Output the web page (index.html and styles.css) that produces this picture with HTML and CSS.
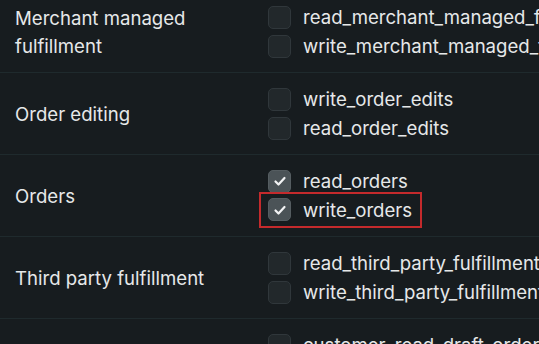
FILE: index.html
```html
<!DOCTYPE html>
<html>
<head>
    <title>Access scopes</title>
    <link rel="stylesheet" href="styles.css">
</head>
<body>

<div class="scope-list">
    <div class="scope-row">
        <div class="scope-name">Merchant managed<br>fulfillment</div>
        <div class="scope-options">
            <label class="option"><span class="box"></span>read_merchant_managed_fulfillment_orders</label>
            <label class="option"><span class="box"></span>write_merchant_managed_fulfillment_orders</label>
        </div>
    </div>
    <div class="scope-row">
        <div class="scope-name">Order editing</div>
        <div class="scope-options">
            <label class="option"><span class="box"></span>write_order_edits</label>
            <label class="option"><span class="box"></span>read_order_edits</label>
        </div>
    </div>
    <div class="scope-row">
        <div class="scope-name">Orders</div>
        <div class="scope-options">
            <label class="option"><span class="box checked"><svg viewBox="0 0 16 16"><path d="M3.5 8.5l3 3 6-6.5"/></svg></span>read_orders</label>
            <label class="option highlight"><span class="box checked"><svg viewBox="0 0 16 16"><path d="M3.5 8.5l3 3 6-6.5"/></svg></span>write_orders</label>
        </div>
    </div>
    <div class="scope-row">
        <div class="scope-name">Third party fulfillment</div>
        <div class="scope-options">
            <label class="option"><span class="box"></span>read_third_party_fulfillment_orders</label>
            <label class="option"><span class="box"></span>write_third_party_fulfillment_orders</label>
        </div>
    </div>
    <div class="scope-row">
        <div class="scope-name">Draft orders</div>
        <div class="scope-options">
            <label class="option"><span class="box"></span>customer_read_draft_orders</label>
            <label class="option"><span class="box"></span>read_draft_orders</label>
        </div>
    </div>
</div>

</body>
</html>
```

FILE: styles.css
```css
body {
    margin: 0;
    background: #171c1f;
    color: #e6e8e9;
    font-family: Inter, "Noto Sans", sans-serif;
    font-size: 18.6px;
    overflow: hidden;
}
.scope-list {
    margin-top: -9px;
}
.scope-row {
    display: grid;
    grid-template-columns: 253px 1fr;
    align-items: center;
    height: 81px;
    padding-left: 15px;
    border-bottom: 1px solid #1f2a2d;
    white-space: nowrap;
}
.scope-name {
    line-height: 28px;
}
.scope-options {
    display: flex;
    flex-direction: column;
}
.option {
    display: flex;
    align-items: center;
    gap: 12px;
    height: 29px;
    width: max-content;
}
.option.highlight {
    outline: 2px solid #c42a2c;
    margin-left: -7px;
    padding-left: 7px;
    padding-right: 8px;
    height: 32px;
    margin-top: -2px;
    margin-bottom: -1px;
}
.box {
    width: 21px;
    height: 21px;
    border: 1px solid #30373b;
    border-radius: 5px;
    background: #22282b;
    display: flex;
    align-items: center;
    justify-content: center;
    flex-shrink: 0;
}
.box.checked {
    background: #4b5357;
    border-color: #555d61;
}
.box svg {
    width: 16px;
    height: 16px;
    fill: none;
    stroke: #f2f3f4;
    stroke-width: 2.2;
    stroke-linecap: round;
    stroke-linejoin: round;
}
```
